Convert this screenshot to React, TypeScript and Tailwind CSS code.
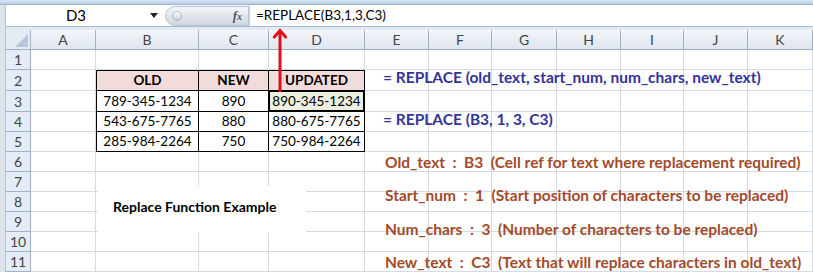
import React from "react";

const cols = [
  { name: "A", w: 65 },
  { name: "B", w: 103 },
  { name: "C", w: 70 },
  { name: "D", w: 96 },
  { name: "E", w: 64 },
  { name: "F", w: 63 },
  { name: "G", w: 65 },
  { name: "H", w: 64 },
  { name: "I", w: 63 },
  { name: "J", w: 64 },
  { name: "K", w: 65 },
];

const rowHeights = [20, 21, 21, 20, 20, 20, 20, 20, 20, 20, 20];

const table: Record<string, string> = {
  B2: "OLD",
  C2: "NEW",
  D2: "UPDATED",
  B3: "789-345-1234",
  C3: "890",
  D3: "890-345-1234",
  B4: "543-675-7765",
  C4: "880",
  D4: "880-675-7765",
  B5: "285-984-2264",
  C5: "750",
  D5: "750-984-2264",
};

const syntax = [
  "= REPLACE (old_text, start_num, num_chars, new_text)",
  "= REPLACE (B3, 1, 3, C3)",
];

const args = [
  "Old_text  :  B3  (Cell ref for text where replacement required)",
  "Start_num  :  1  (Start position of characters to be replaced)",
  "Num_chars  :  3  (Number of characters to be replaced)",
  "New_text  :  C3  (Text that will replace characters in old_text)",
];

function Cell({ col, row }: { col: string; row: number }) {
  const id = col + row;
  const inTable = ["B", "C", "D"].includes(col) && row >= 2 && row <= 5;
  if (inTable) {
    const head = row === 2;
    const selected = id === "D3";
    return (
      <div
        className={`relative flex items-center justify-center border-r border-b border-black text-[13.5px] text-black ${
          head ? "bg-[#f2dcdb] font-bold" : selected ? "bg-[#ebf1de]" : "bg-white"
        } ${row === 2 ? "border-t" : ""} ${col === "B" ? "border-l" : ""}`}
      >
        {selected && <div className="absolute -top-px -left-px -right-px -bottom-px border-2 border-black" />}
        <span className="relative">{table[id]}</span>
      </div>
    );
  }
  return <div className="border-r border-b border-[#d4dbe6]" />;
}

export default function App() {
  const gridCols = `25px ${cols.map((c) => c.w + "px").join(" ")}`;
  return (
    <div className="w-[813px] h-[274px] overflow-hidden bg-white font-['Lato','Liberation_Sans',sans-serif]">
      <div className="h-[5px] bg-gradient-to-b from-[#dbe7f5] to-[#b7cde8] border-b border-[#9db4d3]" />
      <div className="flex">
        <div className="w-[6px] shrink-0 bg-[#dfe4ea] border-r border-[#b9c3cf]" />
        <div className="flex-1 relative">
          {/* formula bar */}
          <div className="h-[22px] flex items-center bg-white border-b border-[#a9bcd5]">
            <div className="w-[140px] text-center text-[15px] text-black">D3</div>
            <div className="w-[15px] flex justify-center">
              <svg width="8" height="5" viewBox="0 0 8 5">
                <path d="M0 0 L8 0 L4 5 Z" fill="#222" />
              </svg>
            </div>
            <div className="ml-[4px] h-[20px] w-[84px] flex items-center rounded-l-full border border-[#b7c4d4] bg-gradient-to-b from-[#f4f6f9] via-[#e1e6ed] to-[#cfd7e2]">
              <div className="ml-[6px] w-[10px] h-[10px] rounded-full bg-gradient-to-b from-white to-[#c9d2de] border border-[#aab6c6]" />
              <span className="ml-auto mr-[6px] font-['Liberation_Serif',serif] italic text-[13px] font-bold text-[#555]">
                f<span className="text-[10px]">x</span>
              </span>
            </div>
            <div className="h-full w-px bg-[#c7d2e0]" />
            <div className="pl-[6px] text-[13.5px] text-black">=REPLACE(B3,1,3,C3)</div>
          </div>
          <div className="h-[3px] bg-[#e3e9f1]" />

          {/* grid */}
          <div className="relative">
            <div
              className="grid"
              style={{ gridTemplateColumns: gridCols, gridTemplateRows: "20px " + rowHeights.map((h) => h + "px").join(" ") }}
            >
              <div className="relative border-r border-b border-[#9eb1c8] bg-[#e4ebf5]">
                <svg className="absolute right-[2px] bottom-[2px]" width="13" height="13" viewBox="0 0 13 13">
                  <path d="M13 0 L13 13 L0 13 Z" fill="#b8c8dc" />
                </svg>
              </div>
              {cols.map((c) => (
                <div
                  key={c.name}
                  className="flex items-center justify-center border-r border-b border-[#9eb1c8] bg-gradient-to-b from-[#f3f6fa] to-[#dfe6ef] text-[14px] text-[#444]"
                >
                  {c.name}
                </div>
              ))}
              {rowHeights.map((_, i) => (
                <React.Fragment key={i}>
                  <div className="flex items-center justify-center border-r border-b border-[#9eb1c8] bg-[#e4ecf7] text-[14px] text-[#444]">
                    {i + 1}
                  </div>
                  {cols.map((c) => (
                    <Cell key={c.name} col={c.name} row={i + 1} />
                  ))}
                </React.Fragment>
              ))}
            </div>

            {/* notes text boxes (transparent, gridlines show through) */}
            <div className="absolute left-[377px] top-[37px] flex flex-col gap-[22px] text-[15.5px] font-bold leading-[20px] text-[#333399] whitespace-pre">
              {syntax.map((t) => (
                <div key={t}>{t}</div>
              ))}
            </div>
            <div className="absolute left-[379px] top-[122px] flex flex-col gap-[13.3px] text-[15.5px] font-bold leading-[20px] text-[#a34a2b] whitespace-pre">
              {args.map((t) => (
                <div key={t}>{t}</div>
              ))}
            </div>

            {/* text box */}
            <div className="absolute left-[92px] top-[156px] w-[208px] h-[47px] bg-white flex">
              <span className="ml-[15px] mt-[10px] text-[14px] font-bold text-black">Replace Function Example</span>
            </div>

            {/* red arrow */}
            <svg className="absolute left-[266px] top-[-2px]" width="16" height="64" viewBox="0 0 16 64">
              <path d="M8 3 L8 64" stroke="#e0101c" strokeWidth="3" />
              <path d="M1.5 10 L8 2.5 L14.5 10" stroke="#e0101c" strokeWidth="3" fill="none" />
            </svg>
          </div>
        </div>
      </div>
    </div>
  );
}
